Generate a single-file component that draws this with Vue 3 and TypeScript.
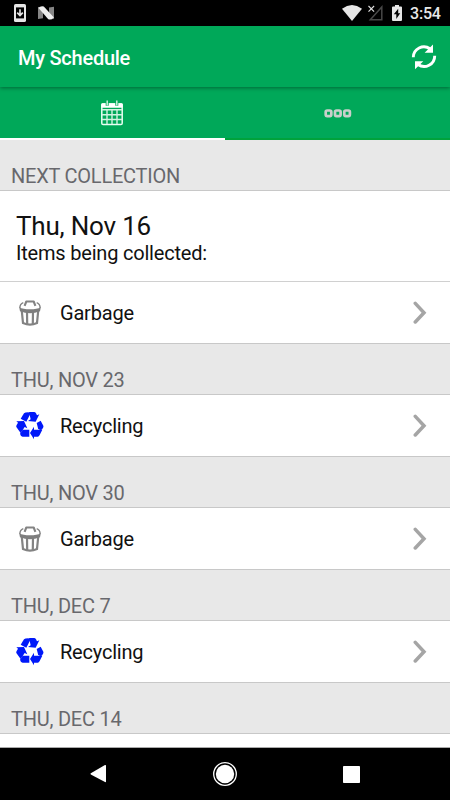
<script setup lang="ts">
type Kind = 'Garbage' | 'Recycling'
interface Day { title: string; kind: Kind | null; next?: boolean }

const days: Day[] = [
  { title: 'NEXT COLLECTION', kind: 'Garbage', next: true },
  { title: 'THU, NOV 23', kind: 'Recycling' },
  { title: 'THU, NOV 30', kind: 'Garbage' },
  { title: 'THU, DEC 7', kind: 'Recycling' },
  { title: 'THU, DEC 14', kind: null },
]
</script>

<template>
  <div class="screen">
    <div class="status">
      <svg class="s-phone" width="12" height="18" viewBox="0 0 12 18">
        <rect width="12" height="18" rx="1.6" fill="#e6e6e6" />
        <rect x="2" y="3.4" width="8" height="11" fill="#000" />
        <path d="M6 5.2v6M3.2 8.6L6 11.6 8.8 8.6" fill="none" stroke="#e6e6e6" stroke-width="1.6" />
      </svg>
      <svg class="s-n" width="16" height="14" viewBox="0 0 16 14">
        <path d="M0 .8L5 5v7.3L0 13zM16 .8v12.4L11 9V1.500z" fill="#858585" />
        <path d="M.3 1.800Q2.500-.4 5.800.4L15.900 11.400Q13.500 14.400 10.300 13.300z" fill="#eee" />
      </svg>
      <span class="grow" />
      <svg class="s-wifi" width="20" height="16" viewBox="0 0 20 16">
        <path d="M0 3.800Q10-3.600 20 3.800L10 16z" fill="#e6e6e6" />
      </svg>
      <svg class="s-cell" width="15" height="16" viewBox="0 0 15 16">
        <path d="M13.800 2v12.800H2.300z" fill="none" stroke="#484848" stroke-width="1.500" />
        <path d="M.5 1l5.600 5.700M6.100 1L.5 6.700" stroke="#e0e0e0" stroke-width="1.100" />
      </svg>
      <svg class="s-batt" width="10" height="16" viewBox="0 0 10 16">
        <path d="M3 0h4v1.600h2q1 0 1 1V15q0 1-1 1H1q-1 0-1-1V2.600q0-1 1-1h2z" fill="#e6e6e6" />
        <path d="M6.200 3.800L1.800 9.300h2.500V14L8.200 8.300H6.200z" fill="#000" />
      </svg>
      <span class="clock">3:54</span>
    </div>

    <header class="bar">
      <h1>My Schedule</h1>
      <svg width="26" height="28" viewBox="0 0 26 28">
        <g fill="none" stroke="#fff" stroke-width="2.900">
          <path d="M2.300 14.300A10.600 10.600 0 0 1 19 5.800" />
          <path d="M23.700 12.700A10.600 10.600 0 0 1 7 21.500" />
        </g>
        <path d="M22 1.500v8.200h-8.400zM4 26.200v-8h8.300z" fill="#fff" />
      </svg>
    </header>

    <nav class="tabs">
      <div class="tab active">
        <svg class="cal" width="22" height="26" viewBox="0 0 22 26">
          <rect x=".8" y="4" width="20.400" height="20.500" rx="1.300" fill="none" stroke="#e9fff3" stroke-width="1.500" />
          <rect x=".3" y="3.300" width="21.400" height="4.500" rx="1" fill="#fff" />
          <path d="M1 9.700h20M1 14.700h20M1 19.500h20M6 10v14M11 10v14M16 10v14" stroke="#d2f3e1" stroke-width="1.400" />
          <path d="M6.200.8v5M15.800.8v5" stroke="#00a95b" stroke-width="3" />
          <path d="M6.200.5v5M15.800.5v5" stroke="#d8f5e5" stroke-width="1.400" />
        </svg>
      </div>
      <div class="tab">
        <svg width="28" height="10" viewBox="0 0 28 10">
          <g fill="none" stroke="#c9cfcb" stroke-width="2.700">
            <rect x="1.700" y="2.500" width="5.600" height="5.600" rx="1.500" />
            <rect x="11" y="2.500" width="5.600" height="5.600" rx="1.500" />
            <rect x="20.300" y="2.500" width="5.600" height="5.600" rx="1.500" />
          </g>
        </svg>
      </div>
    </nav>

    <main class="list">
      <section v-for="day in days" :key="day.title">
        <h2>{{ day.title }}</h2>
        <div v-if="day.next" class="next">
          <p class="date">Thu, Nov 16</p>
          <p class="items">Items being collected:</p>
        </div>
        <div v-if="day.kind" class="row">
          <span class="icon">
            <svg v-if="day.kind === 'Garbage'" width="22" height="26" viewBox="0 0 22 26">
              <g fill="none" stroke="#838383">
                <path d="M5.600 5.800L7.300 1.500h7.400l1.700 4.300" stroke-width="2.100" stroke-linejoin="round" />
                <path d="M4.300 2.700Q.8 4 .9 8M17.700 2.700Q21.200 4 21.100 8" stroke-width="1.400" />
                <path d="M2.700 10l1.300 13Q11 26.300 18 23L19.300 10" stroke-width="2.200" />
                <path d="M8 11l.2 13.300M14 11l-.2 13.300" stroke-width="2.200" />
              </g>
              <path d="M.2 7.300Q4 9.300 11 9.300T21.800 7.300L21 11.300Q16 13.200 11 13.200T1 11.300z" fill="#7e7e7e" />
            </svg>
            <svg v-else width="28" height="28" viewBox="0 0 84 84" fill="#0018f9">
              <path d="M14 20L24 4Q27 1 37 1L44 4 31 29z" />
              <path d="M39 0H54Q58 0 60 4L63 10 70 7 59 29 36 27 44 22z" />
              <path d="M62 33L74 26 82 41Q83 44 81 48L76 54Q69 55 66 49z" />
              <path d="M54 44V53H79L71 69Q69 74 65 74H54V82L42 63z" />
              <path d="M1 28L24 27 34 49 26 45 14 63 1 45Q0 42 2 39L6 32z" />
              <path d="M20 53H40V74H20Q16 74 14 70L12 65z" />
            </svg>
          </span>
          <span class="label">{{ day.kind }}</span>
          <svg width="14" height="24" viewBox="0 0 14 24">
            <path d="M2.300 2.400l8.700 9.300-8.700 9.300" fill="none" stroke="#a5a5a5" stroke-width="3.500" stroke-linecap="round" />
          </svg>
        </div>
        <div v-else class="partial" />
      </section>
    </main>

    <footer class="nav">
      <svg width="18" height="20" viewBox="0 0 18 20"><path d="M.8 9.300L15 1q1-.4 1 .7v15.800q0 1-1 .6L.8 10.500q-.7-.6 0-1.200z" fill="#fff" /></svg>
      <svg width="24" height="24" viewBox="0 0 24 24">
        <circle cx="12" cy="12" r="11.300" fill="none" stroke="#fff" stroke-width="1.300" />
        <circle cx="12" cy="12" r="9.200" fill="#fff" />
      </svg>
      <svg width="18" height="17" viewBox="0 0 18 17"><rect x="1" width="17" height="17" rx=".8" fill="#fff" /></svg>
    </footer>
  </div>
</template>

<style>
body { margin: 0; }
</style>

<style scoped>
* { box-sizing: border-box; }
.screen {
  width: 450px; height: 800px; overflow: hidden; display: flex; flex-direction: column;
  font-family: Roboto, "Liberation Sans", sans-serif; background: #fff; color: #111; letter-spacing: -.2px;
}
svg { display: block; flex: none; }
h1, h2, p { margin: 0; font-weight: 400; }
.status { height: 26px; flex: none; background: #000; display: flex; align-items: center; padding: 0 10px 0 14px; }
.s-n { margin-left: 12px; }
.grow { flex: 1; }
.s-cell { margin-left: 6px; }
.s-batt { margin-left: 9px; }
.clock { margin-left: 8px; width: 30px; color: #e8e8e8; font-size: 16px; font-weight: 500; line-height: 26px; white-space: nowrap; padding-top: 2px; }
.bar {
  height: 61px; flex: none; background: #00a859; display: flex; align-items: center; justify-content: space-between;
  padding: 0 13px 0 18px; position: relative; box-shadow: 0 1px 4px rgba(0, 0, 0, .4);
}
.bar h1 { color: #fff; font-size: 20px; font-weight: 500; line-height: 24px; padding-top: 2px; letter-spacing: -.25px; }
.tabs { height: 53px; flex: none; background: #00a859; display: flex; }
.tab { width: 225px; display: flex; align-items: center; justify-content: center; border-bottom: 2px solid #00a23c; }
.tab.active { border-color: #fff; padding-right: 1px; }
.list { height: 608px; flex: none; overflow: hidden; border-bottom: 1px solid #aaa; }
h2 {
  height: 51px; background: #e8e8e8; border-bottom: 1px solid #c8c8c8; color: #68686d;
  font-size: 20px; line-height: 24px; padding: 24px 11px 0; letter-spacing: -.23px;
}
.next { height: 91px; border-bottom: 1px solid #d0d0d0; padding: 20px 16px 0; }
.date { font-size: 26px; line-height: 31px; }
.items { font-size: 20px; line-height: 22px; }
.row { height: 62px; display: flex; align-items: center; border-bottom: 1px solid #c8c8c8; padding: 0 23px 0 16px; }
.icon { width: 28px; display: flex; justify-content: center; }
.label { flex: 1; margin-left: 16px; font-size: 20px; line-height: 24px; }
.partial { height: 20px; }
.nav { height: 52px; flex: none; background: #000; display: flex; align-items: center; justify-content: space-between; padding: 0 90px; }
</style>
